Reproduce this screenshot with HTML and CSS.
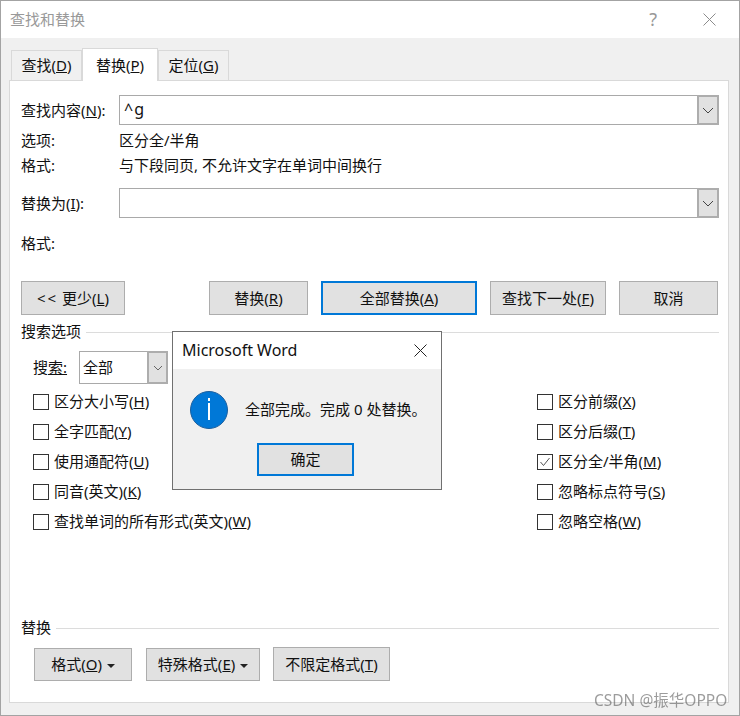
FILE: index.html
```html
<!doctype html>
<html>
<head>
  <meta charset="utf-8">
  <title>查找和替换</title>
  <link rel="stylesheet" href="styles.css">
</head>
<body>
  <div class="window">
    <div class="titlebar">
      <span class="title">查找和替换</span>
      <span class="help">?</span>
      <svg class="close" width="13" height="13" viewBox="0 0 13 13"><path d="M0.5 0.5L12.5 12.5M12.5 0.5L0.5 12.5" stroke="#8c8c8c" fill="none"/></svg>
    </div>

    <div class="tabs">
      <div class="tab">查找(<u>D</u>)</div>
      <div class="tab active">替换(<u>P</u>)</div>
      <div class="tab">定位(<u>G</u>)</div>
    </div>

    <div class="panel">
      <div class="field">
        <label>查找内容(<u>N</u>):</label>
        <div class="combo">
          <span class="combo-value find-value">^g</span>
          <span class="combo-btn"><svg width="12" height="7" viewBox="0 0 12 7"><path d="M1 1L6 6L11 1" stroke="#444" fill="none"/></svg></span>
        </div>
      </div>
      <div class="info first"><label>选项:</label><span>区分全/半角</span></div>
      <div class="info"><label>格式:</label><span>与下段同页, 不允许文字在单词中间换行</span></div>
      <div class="field replace">
        <label>替换为(<u>I</u>):</label>
        <div class="combo">
          <span class="combo-value"></span>
          <span class="combo-btn"><svg width="12" height="7" viewBox="0 0 12 7"><path d="M1 1L6 6L11 1" stroke="#444" fill="none"/></svg></span>
        </div>
      </div>
      <div class="info replace-format"><label>格式:</label><span></span></div>

      <div class="actions">
        <button class="btn less"><span class="arrows">&lt;&lt;</span> 更少(<u>L</u>)</button>
        <button class="btn w99">替换(<u>R</u>)</button>
        <button class="btn default w156">全部替换(<u>A</u>)</button>
        <button class="btn w116">查找下一处(<u>F</u>)</button>
        <button class="btn w99">取消</button>
      </div>

      <div class="legend search-legend"><span>搜索选项</span></div>

      <div class="search-row">
        <label>搜<u>索:</u></label>
        <div class="search-select">
          <span class="search-value">全部</span>
          <span class="combo-btn small"><svg width="10" height="6" viewBox="0 0 10 6"><path d="M1 1L5 5L9 1" stroke="#666" fill="none"/></svg></span>
        </div>
      </div>

      <div class="checks">
        <div class="check-col">
          <div class="check"><span class="box"></span>区分大小写(<u>H</u>)</div>
          <div class="check"><span class="box"></span>全字匹配(<u>Y</u>)</div>
          <div class="check"><span class="box"></span>使用通配符(<u>U</u>)</div>
          <div class="check"><span class="box"></span>同音(英文)(<u>K</u>)</div>
          <div class="check"><span class="box"></span>查找单词的所有形式(英文)(<u>W</u>)</div>
        </div>
        <div class="check-col">
          <div class="check"><span class="box"></span>区分前缀(<u>X</u>)</div>
          <div class="check"><span class="box"></span>区分后缀(<u>T</u>)</div>
          <div class="check"><span class="box"><svg width="14" height="14" viewBox="0 0 14 14"><path d="M2.5 7L5.5 10.5L11.5 3" stroke="#555" fill="none"/></svg></span>区分全/半角(<u>M</u>)</div>
          <div class="check"><span class="box"></span>忽略标点符号(<u>S</u>)</div>
          <div class="check"><span class="box"></span>忽略空格(<u>W</u>)</div>
        </div>
      </div>

      <div class="legend bottom-legend"><span>替换</span></div>
      <div class="format-btns">
        <button class="btn w98">格式(<u>O</u>) <i class="caret"></i></button>
        <button class="btn w114">特殊格式(<u>E</u>) <i class="caret"></i></button>
        <button class="btn w117 tall">不限定格式(<u>T</u>)</button>
      </div>
    </div>

    <!-- message box on top of the dialog -->
    <div class="msgbox">
      <div class="msg-title">
        <span>Microsoft Word</span>
        <svg width="13" height="13" viewBox="0 0 13 13"><path d="M0.5 0.5L12.5 12.5M12.5 0.5L0.5 12.5" stroke="#222" fill="none"/></svg>
      </div>
      <div class="msg-body">
        <div class="msg-row">
          <svg class="msg-icon" width="38" height="38" viewBox="0 0 38 38">
            <circle cx="19" cy="19" r="18.5" fill="#0078d7" stroke="#1b5f9e"/>
            <rect x="18" y="7" width="2" height="3" fill="#fff"/>
            <rect x="18" y="12" width="2" height="17" fill="#fff"/>
          </svg>
          <span>全部完成。完成 0 处替换。</span>
        </div>
        <button class="btn default ok">确定</button>
      </div>
    </div>

    <div class="watermark">CSDN @振华OPPO</div>
  </div>
</body>
</html>
```

FILE: styles.css
```css
* { box-sizing: border-box; }
body { margin: 0; font-family: "Noto Sans", "Noto Sans CJK SC", sans-serif; font-size: 15px; color: #111; }
button { font: inherit; color: inherit; padding: 0 0 2px; }

.window { position: relative; width: 740px; height: 716px; display: flex; flex-direction: column; background: #f0f0f0; border: 1px solid #a3a3a3; overflow: hidden; }

.titlebar { height: 37px; flex: none; display: flex; align-items: center; background: #fff; padding: 0 0 2px 9px; }
.title { color: #999; }
.help { margin-left: auto; color: #999; font-size: 18px; margin-right: 46px; }
.close { margin: 2px 23px 0 0; }

.tabs { display: flex; align-items: flex-end; height: 43px; flex: none; margin-left: 10px; margin-bottom: -1px; }
.tab { height: 31px; padding-top: 3px; text-align: center; width: 71px; background: #f0f0f0; border: 1px solid #d9d9d9; border-bottom: none; line-height: 22px; }
.tab.active { position: relative; width: 76px; height: 33px; background: #fff; padding-top: 5px; }

.panel { flex: 1; display: flex; flex-direction: column; margin: 0 10px 12px 8px; padding: 14px 9px 21px 11px; background: #fff; border: 1px solid #d9d9d9; }

.field { display: flex; align-items: center; height: 30px; }
.field label, .info label { width: 98px; flex: none; }
.field label { padding-bottom: 2px; }
.combo { flex: 1; height: 30px; display: flex; border: 1px solid #a9a9a9; }
.combo-value { flex: 1; padding-left: 3px; line-height: 26px; }
.find-value { padding-left: 4px; font-size: 16px; letter-spacing: 1px; }
.combo-btn { width: 22px; display: flex; align-items: center; justify-content: center; background: #e1e1e1; border: 2px solid #adadad; margin: -1px -1px -1px 0; }
.combo-btn.small { width: 21px; }

.info { display: flex; align-items: center; height: 25px; padding-bottom: 4px; }
.info.first { margin-top: 4px; }
.field.replace { margin-top: 9px; }
.info.replace-format { margin-top: 14px; }

.btn { height: 34px; background: #e1e1e1; border: 1px solid #adadad; }
.btn.default { border: 2px solid #0078d7; }

.actions { display: flex; gap: 13px; margin-top: 24px; flex: none; }
.less { width: 104px; margin-right: 71px; }
.arrows { letter-spacing: 2px; }
.w99 { width: 99px; }
.w156 { width: 156px; }
.w116 { width: 116px; }

.legend { display: flex; align-items: center; gap: 5px; height: 20px; flex: none; }
.legend span { margin-bottom: 4px; }
.legend::after { content: ""; flex: 1; border-top: 1px solid #dcdcdc; }
.search-legend { margin-top: 7px; }
.bottom-legend { margin-top: auto; }

.search-row { display: flex; align-items: center; gap: 12px; margin: 9px 0 0 12px; height: 33px; }
.search-row label { padding-bottom: 2px; }
.search-select { width: 89px; height: 33px; display: flex; border: 1px solid #a9a9a9; }
.search-value { flex: 1; padding-left: 3px; line-height: 30px; }

.checks { display: grid; grid-template-columns: 504px 1fr; margin: 3px 0 0 12px; }
.check { display: flex; align-items: center; height: 30px; padding-bottom: 3px; }
.box { width: 16px; height: 16px; margin: 3px 5px 0 0; display: flex; align-items: center; justify-content: center; border: 1px solid #333; background: #fff; }

.format-btns { display: flex; align-items: flex-end; gap: 14px; margin: 9px 0 0 13px; }
.format-btns .btn { height: 33px; }
.format-btns .btn.tall { height: 34px; margin-left: -1px; }
.w98 { width: 98px; }
.w114 { width: 114px; }
.w117 { width: 117px; }
.caret { display: inline-block; margin: 0 0 2px 1px; border: 4px solid transparent; border-top-color: #222; border-bottom: 0; }

.msgbox { position: absolute; left: 171px; top: 330px; width: 270px; height: 159px; display: flex; flex-direction: column; background: #f0f0f0; border: 1px solid #707070; }
.msg-title { height: 37px; flex: none; display: flex; align-items: center; justify-content: space-between; background: #fff; padding: 0 14px 2px 9px; font-size: 16px; }
.msg-title svg { margin-top: 2px; }
.msg-body { padding: 22px 0 0 17px; }
.msg-row { display: flex; align-items: center; gap: 17px; }
.msg-row span { margin-bottom: 3px; }
.msg-icon { flex: none; }
.btn.ok { display: block; width: 97px; height: 33px; margin: 14px 0 0 67px; }

.watermark { position: absolute; left: 593px; top: 687px; font-size: 15.5px; color: rgba(90, 90, 90, 0.6); filter: blur(0.4px); }
```
